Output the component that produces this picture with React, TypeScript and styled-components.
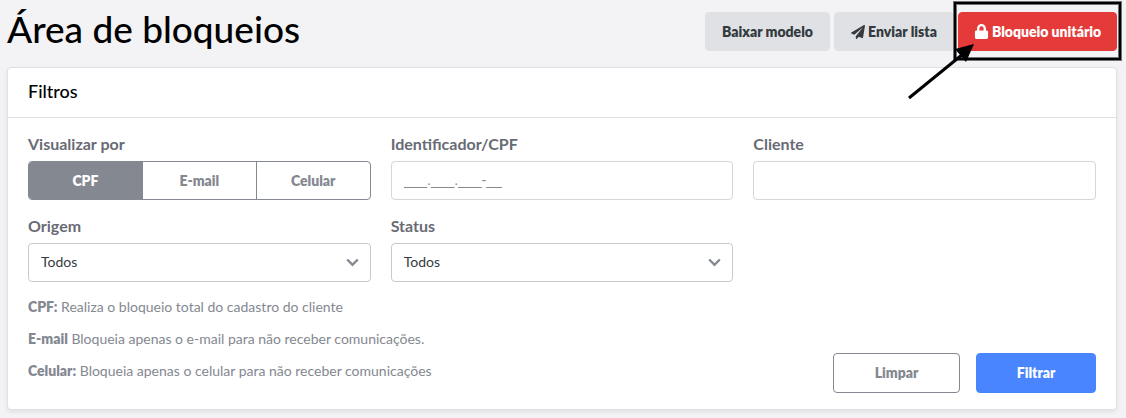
import React from "react";
import styled, { createGlobalStyle, css } from "styled-components";
import { FaLock, FaPaperPlane } from "react-icons/fa";

const GlobalStyle = createGlobalStyle`
  *, *::before, *::after { box-sizing: border-box; }
  body {
    margin: 0;
    background: #f3f3f5;
    color: #000;
    font-family: Lato, "Liberation Sans", sans-serif;
    font-size: 14px;
    line-height: 20px;
  }
  button, input, select { font: inherit; }
`;

const Page = styled.main`
  padding: 8px 9px 8px 7px;
`;

const PageHeader = styled.header`
  display: flex;
  justify-content: space-between;
  align-items: flex-start;
  height: 59px;
`;

const Title = styled.h1`
  margin: 0;
  font-size: 37px;
  line-height: 42px;
  font-weight: 500;
`;

const Actions = styled.div`
  display: flex;
  gap: 4px;
  padding-top: 4px;
`;

type Variant = "neutral" | "danger" | "outline" | "primary";

const variants = {
  neutral: css`background: #dfe1e4; border-color: #dfe1e4; color: #343a40;`,
  danger: css`background: #e53a3a; border-color: #e53a3a; color: #fff;`,
  outline: css`background: #fff; border-color: #848891; color: #848891;`,
  primary: css`background: #4885ff; border-color: #4885ff; color: #fff;`,
};

const Button = styled.button<{ $variant: Variant; $width: number; $tall?: boolean }>`
  display: inline-flex;
  align-items: center;
  justify-content: center;
  gap: 3px;
  min-width: ${(p) => p.$width}px;
  height: ${(p) => (p.$tall ? 40 : 39)}px;
  padding: 0;
  border: 1px solid;
  border-radius: 4px;
  font-weight: 800;
  white-space: nowrap;
  cursor: pointer;
  ${(p) => variants[p.$variant]}
`;

const Highlighted = styled.div`
  position: relative;
`;

const HighlightFrame = styled.span`
  position: absolute;
  inset: -10px -4px -9px;
  border: 2px solid #000;
  box-shadow: 0 0 0 1px #6f7173, inset 0 0 0 1px #6f7173;
  pointer-events: none;
`;

const Arrow = styled.svg`
  position: absolute;
  left: -52px;
  top: 30px;
  pointer-events: none;
`;

const Card = styled.section`
  background: #fff;
  border: 1px solid #e0e1e5;
  border-radius: 4px;
  box-shadow: 0 2px 4px rgba(0, 0, 0, 0.08);
`;

const CardTitle = styled.h2`
  margin: 0;
  padding: 13px 20px 16px;
  border-bottom: 1px solid #e0e1e5;
  font-size: 18px;
  line-height: 20px;
  font-weight: 500;
`;

const CardBody = styled.form`
  padding: 16px 20px;
`;

const Fields = styled.div`
  display: grid;
  grid-template-columns: repeat(3, 1fr);
  gap: 16px 20px;
`;

const Field = styled.div`
  min-width: 0;
`;

const labelText = css`
  display: block;
  padding: 0;
  margin-bottom: 7px;
  font-size: 16px;
  line-height: 20px;
  font-weight: 700;
  color: #686b74;
`;

const Label = styled.label`${labelText}`;

const Legend = styled.legend`${labelText}`;

const RadioField = styled.fieldset`
  min-width: 0;
  margin: 0;
  padding: 0;
  border: 0;
`;

const Segments = styled.div`
  display: flex;
  height: 39px;
  border: 1px solid #848891;
  border-radius: 4px;
  overflow: hidden;
`;

const Segment = styled.label`
  position: relative;
  flex: 1;
  display: flex;
  align-items: center;
  justify-content: center;
  font-weight: 800;
  color: #848891;
  cursor: pointer;
  & + & { border-left: 1px solid #848891; }
  &:has(input:checked) { background: #848891; color: #fff; }
`;

const SegmentRadio = styled.input`
  position: absolute;
  inset: 0;
  margin: 0;
  opacity: 0;
  cursor: pointer;
`;

const control = css`
  display: block;
  width: 100%;
  height: 39px;
  padding: 0 12px 2px;
  border: 1px solid #d5d6da;
  border-radius: 4px;
  background: #fff;
  color: #343a40;
  outline: none;
`;

const TextInput = styled.input`
  ${control}
  &::placeholder {
    color: #85888f;
    opacity: 1;
    font-family: "Liberation Sans", sans-serif;
  }
`;

const SelectBox = styled.div`
  position: relative;
`;

const Select = styled.select`
  ${control}
  border-color: #c8c9cc;
  appearance: none;
`;

const Chevron = styled.svg`
  position: absolute;
  right: 12px;
  top: 15px;
  pointer-events: none;
`;

const CardFooter = styled.div`
  display: flex;
  justify-content: space-between;
  align-items: flex-end;
  margin-top: 15px;
`;

const Notes = styled.div`
  display: grid;
  gap: 12px;
  padding-bottom: 12px;
  color: #848891;
`;

const Note = styled.p`
  margin: 0;
`;

const Term = styled.strong`
  font-weight: 800;
`;

const FormActions = styled.div`
  display: flex;
  gap: 16px;
`;

const viewModes = ["CPF", "E-mail", "Celular"];

const notes = [
  { term: "CPF:", text: "Realiza o bloqueio total do cadastro do cliente" },
  { term: "E-mail", text: "Bloqueia apenas o e-mail para não receber comunicações." },
  { term: "Celular:", text: "Bloqueia apenas o celular para não receber comunicações" },
];

function SelectField({ id, label }: { id: string; label: string }) {
  return (
    <Field>
      <Label htmlFor={id}>{label}</Label>
      <SelectBox>
        <Select id={id} defaultValue="todos">
          <option value="todos">Todos</option>
        </Select>
        <Chevron width="13" height="9" viewBox="0 0 13 9" fill="none" aria-hidden="true">
          <path d="M1.2 1.5 L6.5 6.8 L11.8 1.5" stroke="#848891" strokeWidth="2.4" />
        </Chevron>
      </SelectBox>
    </Field>
  );
}

export default function App() {
  return (
    <>
      <GlobalStyle />
      <Page>
        <PageHeader>
          <Title>Área de bloqueios</Title>
          <Actions>
            <Button type="button" $variant="neutral" $width={125}>Baixar modelo</Button>
            <Button type="button" $variant="neutral" $width={120}>
              <FaPaperPlane size={14} aria-hidden="true" />
              Enviar lista
            </Button>
            <Highlighted>
              <Button type="button" $variant="danger" $width={159}>
                <FaLock size={15} aria-hidden="true" />
                Bloqueio unitário
              </Button>
              <HighlightFrame />
              <Arrow width="72" height="60" viewBox="0 0 72 60" aria-hidden="true">
                <path d="M3 56 L57 12" stroke="#000" strokeWidth="3" fill="none" />
                <path d="M68 2 L49 7 L60 20 Z" fill="#000" />
              </Arrow>
            </Highlighted>
          </Actions>
        </PageHeader>

        <Card>
          <CardTitle>Filtros</CardTitle>
          <CardBody onSubmit={(e) => e.preventDefault()}>
            <Fields>
              <RadioField>
                <Legend>Visualizar por</Legend>
                <Segments>
                  {viewModes.map((mode) => (
                    <Segment key={mode}>
                      <SegmentRadio type="radio" name="modo" value={mode} defaultChecked={mode === "CPF"} />
                      {mode}
                    </Segment>
                  ))}
                </Segments>
              </RadioField>
              <Field>
                <Label htmlFor="identificador">Identificador/CPF</Label>
                <TextInput id="identificador" type="text" placeholder="___.___.___-__" />
              </Field>
              <Field>
                <Label htmlFor="cliente">Cliente</Label>
                <TextInput id="cliente" type="text" />
              </Field>
              <SelectField id="origem" label="Origem" />
              <SelectField id="status" label="Status" />
            </Fields>
            <CardFooter>
              <Notes>
                {notes.map((note) => (
                  <Note key={note.term}>
                    <Term>{note.term}</Term> {note.text}
                  </Note>
                ))}
              </Notes>
              <FormActions>
                <Button type="reset" $variant="outline" $width={127} $tall>Limpar</Button>
                <Button type="submit" $variant="primary" $width={120} $tall>Filtrar</Button>
              </FormActions>
            </CardFooter>
          </CardBody>
        </Card>
      </Page>
    </>
  );
}
